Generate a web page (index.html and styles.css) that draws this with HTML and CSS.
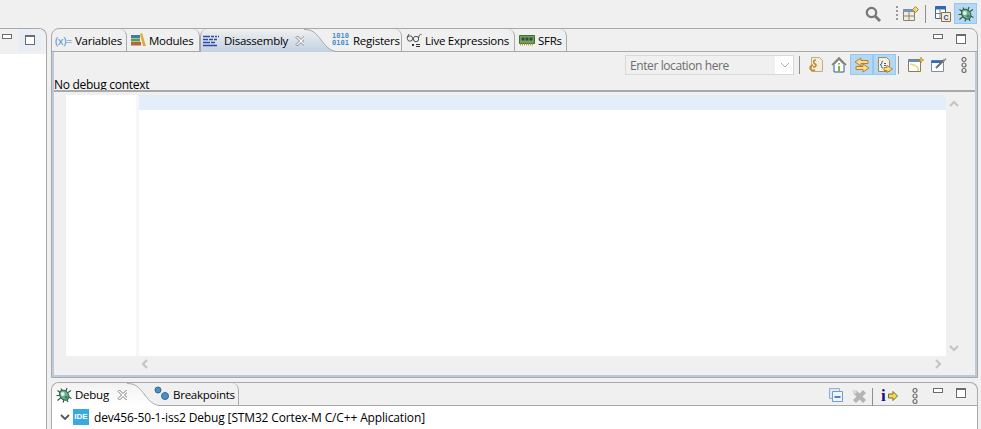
FILE: index.html
```html
<!DOCTYPE html>
<html lang="en">
<head>
<meta charset="utf-8">
<title>Debug</title>
<link rel="stylesheet" href="styles.css">
</head>
<body>
<svg class="defs" width="0" height="0">
  <defs>
    <linearGradient id="fade-blue" x1="0" y1="0" x2="0" y2="1"><stop offset="0" stop-color="#f0f0f0"/><stop offset="1" stop-color="#c2d1e1"/></linearGradient>
    <linearGradient id="fade-white" x1="0" y1="0" x2="0" y2="1"><stop offset="0" stop-color="#f2f2f2"/><stop offset="1" stop-color="#ffffff"/></linearGradient>
    <symbol id="bug" viewBox="0 0 16 16">
      <path d="M5 1.500l1.500 3M1.500 3.500L5 6M.5 8.500h3M1.500 13.500l3.500-3M7 15.500l1-3M12 15l-1.500-3.500M15.500 11.500l-3-1.500M15 3.500L12 5.500M11 1l-1 3" stroke="#2c5a44" stroke-width="1.100"/>
      <ellipse cx="8.200" cy="8.200" rx="4.200" ry="5.500" fill="#6fae8e" stroke="#2f5f48" transform="rotate(-40 8.200 8.200)"/>
      <circle cx="6.800" cy="7" r="1.900" fill="#e4f3ea"/>
      <circle cx="10.200" cy="10.200" r="1.400" fill="#3f8062"/>
    </symbol>
    <symbol id="close" viewBox="0 0 12 12">
      <path d="M2.500 1L6 4.500 9.500 1 11 2.500 7.500 6 11 9.500 9.500 11 6 7.500 2.500 11 1 9.500 4.500 6 1 2.500z" fill="#fff" stroke="#808080"/>
    </symbol>
    <symbol id="more" viewBox="0 0 8 16">
      <circle cx="4" cy="2.500" r="2" fill="none" stroke="#6e6e6e" stroke-width="1.200"/><circle cx="4" cy="8" r="2" fill="none" stroke="#6e6e6e" stroke-width="1.200"/><circle cx="4" cy="13.500" r="2" fill="none" stroke="#6e6e6e" stroke-width="1.200"/>
    </symbol>
  </defs>
</svg>

<header class="perspective-bar">
  <svg class="icon search-icon" viewBox="0 0 16 16"><circle cx="6.500" cy="6.500" r="4.700" fill="none" stroke="#777" stroke-width="2.200"/><path d="M10 10l5 5" stroke="#777" stroke-width="2.800"/></svg>
  <span class="dots-v"></span>
  <svg class="icon open-persp" viewBox="0 0 16 16"><path d="M.5 3.500h11v11H.5z" fill="#f3ecdc" stroke="#8a8272"/><path d="M.5 3.500h11v2.500H.5z" fill="#6f9ac4"/><path d="M.5 10h11M6 6v8.500" stroke="#8a8272"/><path d="M12.500 .5l3 3-3 3-3-3z" fill="#f4d67a" stroke="#b58a2c"/></svg>
  <span class="sep-v"></span>
  <span class="persp-btn"><svg class="icon" viewBox="0 0 16 16"><path d="M.5 .5h10v12H.5z" fill="#fff" stroke="#45648c"/><path d="M.5 .5h10v3H.5z" fill="#2f6bb8"/><path d="M.5 7.500h10M5 3.500v9" stroke="#6a7f9a"/><path d="M6.500 6.500h9v9h-9z" fill="#f3ecdc" stroke="#85704a"/><text x="8.500" y="14" class="c-mark">C</text></svg></span>
  <span class="persp-btn persp-active"><svg class="icon" viewBox="0 0 16 16"><use href="#bug"/></svg></span>
</header>

<main class="workspace">
  <aside class="stub">
    <div class="stub-head">
      <span class="win-min"></span>
      <span class="win-max-wrap"><span class="win-max"></span></span>
    </div>
    <div class="stub-body"></div>
  </aside>

  <div class="stack">
    <section class="panel panel-top">
      <div class="tabbar">
        <div class="tab tab-var">
          <span class="var-mark">(x)=</span><span>Variables</span>
        </div>
        <div class="tab tab-mod">
          <svg class="icon" viewBox="0 0 16 16"><path d="M1 3h9v3H1z" fill="#3f7d9e"/><path d="M1 6.500h9v3H1z" fill="#5d9a55"/><path d="M1 10h10v3.500H1z" fill="#b5673a"/><path d="M10 2l2-1 4 13h-3z" fill="#e0a93e"/></svg>
          <span>Modules</span>
        </div>
        <div class="tab tab-selected">
          <svg class="icon" viewBox="0 0 16 16"><path d="M0 3.500h7M8 3.500h3M12 3.500h2M15 3.500h1M0 6.500h5M6 6.500h4M11 6.500h3M0 9.500h7M8 9.500h4M0 12.500h14" stroke="#2c48a8" stroke-width="1.400"/></svg>
          <span class="tab-label">Disassembly</span>
          <svg class="tab-close" viewBox="0 0 12 12"><use href="#close"/></svg>
          <svg class="tab-curve" viewBox="0 0 32 23" preserveAspectRatio="none"><path d="M0 0c8 0 11 3 16 9 5 7 9 12 16 13v1H0z" fill="url(#fade-blue)"/><path d="M0 .5c8 0 11 3 16 9 5 7 9 12 16 13" fill="none" stroke="#a8a8a8"/></svg>
        </div>
        <div class="tab tab-reg">
          <span class="bin-mark">1010<br>0101</span>
          <span>Registers</span>
        </div>
        <div class="tab tab-live">
          <svg class="icon" viewBox="0 0 16 16"><circle cx="4" cy="6.500" r="2.700" fill="none" stroke="#555"/><circle cx="10" cy="7" r="2.700" fill="none" stroke="#555"/><path d="M1 5.500l2-3.500M12.500 6c.5-3 1.500-4 3-3.500M6.500 6.500h1" fill="none" stroke="#555"/><path d="M6 12l2 2M8 12l-2 2M10 12.500h4M10 14.500h4" stroke="#333"/></svg>
          <span>Live Expressions</span>
        </div>
        <div class="tab tab-sfr">
          <svg class="icon" viewBox="0 0 16 16"><path d="M.5 3.500h15v8H.5z" fill="#6da35a" stroke="#3d6e36"/><path d="M2.500 5.500h3v3h-3zM6.500 5.500h3v3h-3zM10.500 5.500h3v3h-3z" fill="#444"/><path d="M1 12.500h14" stroke="#c2a02e" stroke-width="2" stroke-dasharray="1 1"/></svg>
          <span>SFRs</span>
        </div>
        <div class="tabbar-fill">
          <span class="win-min"></span>
          <span class="win-max"></span>
        </div>
      </div>

      <div class="view-body">
        <div class="view-toolbar">
          <div class="location">
            <span class="location-text">Enter location here</span>
            <svg class="location-arrow" viewBox="0 0 10 6"><path d="M1 1l4 4 4-4" fill="none" stroke="#b0b0b0"/></svg>
          </div>
          <span class="sep-v sep-first"></span>
          <span class="tool"><svg class="icon" viewBox="0 0 16 16"><path d="M3.500 .5h8l3 3v11h-11z" fill="#f3ecd8" stroke="#b5ad95"/><path d="M8 3c-3 0-3 3-1 4s1 3-2 3M5 8s-3 1-3 3 3 3 5 2" fill="none" stroke="#c48a2a" stroke-width="1.600"/></svg></span>
          <span class="tool"><svg class="icon" viewBox="0 0 16 16"><path d="M3 7.500V15h10V7.500L8 2.500z" fill="#fff" stroke="#2e5b94"/><path d="M1 8l7-7 7 7" fill="none" stroke="#8a7a68" stroke-width="1.600"/><path d="M7 6h2v1.500H7zM7 9h2v6H7z" fill="#7cb342"/></svg></span>
          <span class="tool tool-on"><svg class="icon" viewBox="0 0 16 16"><path d="M7 1L1 5l6 4V6.500h7v-3H7z" fill="#f7dca0" stroke="#b9801f"/><path d="M9 7l6 4-6 4v-2.500H2v-3h7z" fill="#f7dca0" stroke="#b9801f"/></svg></span>
          <span class="tool tool-on"><svg class="icon" viewBox="0 0 16 16"><path d="M1.500 .5h8l3 3v11h-11z" fill="#f6f0df" stroke="#9a8a68"/><path d="M6 4C4.500 4 5 6 4.500 7S3 7.500 3 7.500 4.500 8 4.500 9 4.500 11 6 11M7 6.500h2M7 8.500h2" fill="none" stroke="#345a96"/><path d="M10 8.500l5.500 3.500-5.500 3.500v-2H7v-3h3z" fill="#f7dca0" stroke="#b9801f"/></svg></span>
          <span class="sep-v sep-second"></span>
          <span class="tool"><svg class="icon" viewBox="0 0 16 16"><path d="M.5 2.500h12v12H.5z" fill="#fff" stroke="#8c7a50"/><path d="M.5 2.500h12V5H.5z" fill="#5e8fc4"/><path d="M10 14c1-3-1-6-8-7" fill="none" stroke="#f1d27c" stroke-width="1.500"/><path d="M13 0l1 2.500 2 .5-2 .5-1 2.500-1-2.500-2-.5 2-.5z" fill="#e8b93c" stroke="#a67c1a" stroke-width=".5"/></svg></span>
          <span class="tool"><svg class="icon" viewBox="0 0 16 16"><path d="M.5 3.500h12v11H.5z" fill="#fff" stroke="#7f8ea3"/><path d="M.5 3.500h12V6H.5z" fill="#2f6db5"/><path d="M5 11l8-8" stroke="#6e6e6e" stroke-width="2"/><path d="M11.500 4.500l3-3.500 1 1-3 3.500z" fill="#8a8a8a"/></svg></span>
          <svg class="tool-more" viewBox="0 0 8 16"><use href="#more"/></svg>
        </div>
        <div class="status">No debug context</div>
        <div class="editor">
          <div class="editor-main">
            <div class="ruler"></div>
            <div class="ruler-white"></div>
            <div class="ruler-edge"></div>
            <div class="text-area"><div class="current-line"></div></div>
            <div class="vscroll">
              <svg class="arrow" viewBox="0 0 10 10"><path d="M1 7l4-4 4 4" fill="none" stroke="#c4c4c4" stroke-width="2.200"/></svg>
              <svg class="arrow" viewBox="0 0 10 10"><path d="M1 3l4 4 4-4" fill="none" stroke="#c4c4c4" stroke-width="2.200"/></svg>
            </div>
          </div>
          <div class="hscroll">
            <svg class="arrow" viewBox="0 0 10 10"><path d="M7 1L3 5l4 4" fill="none" stroke="#c4c4c4" stroke-width="2.200"/></svg>
            <svg class="arrow" viewBox="0 0 10 10"><path d="M3 1l4 4-4 4" fill="none" stroke="#c4c4c4" stroke-width="2.200"/></svg>
          </div>
        </div>
      </div>
    </section>

    <section class="panel panel-debug">
      <div class="tabbar">
        <div class="tab tab-debug">
          <svg class="icon" viewBox="0 0 16 16"><use href="#bug"/></svg>
          <span>Debug</span>
          <svg class="tab-close" viewBox="0 0 12 12"><use href="#close"/></svg>
          <svg class="tab-curve" viewBox="0 0 32 23" preserveAspectRatio="none"><path d="M0 0c8 0 11 3 16 9 5 7 9 12 16 13v1H0z" fill="url(#fade-white)"/><path d="M0 .5c8 0 11 3 16 9 5 7 9 12 16 13" fill="none" stroke="#a8a8a8"/></svg>
        </div>
        <div class="tab tab-bp">
          <svg class="icon" viewBox="0 0 16 16"><circle cx="4" cy="4" r="3" fill="#4f8fc4" stroke="#2f6a9c"/><circle cx="11" cy="10" r="3.500" fill="#4f8fc4" stroke="#2f6a9c"/></svg>
          <span>Breakpoints</span>
        </div>
        <div class="tabbar-fill">
          <svg class="icon collapse-icon" viewBox="0 0 16 16"><path d="M.5 .5h10v10H.5z" fill="#dbe8f6" stroke="#8fb0d4"/><path d="M3.500 3.500h10v10h-10z" fill="#eef5fc" stroke="#6f9cc8"/><path d="M5.500 9h6" stroke="#2456a0" stroke-width="1.500"/></svg>
          <svg class="icon remove-icon" viewBox="0 0 16 16"><path d="M2 5l3-3 3.500 3.500L12 2l3 3-3.500 3.500L15 12l-3 3-3.500-3.500L5 15l-3-3 3.500-3.500z" fill="#b4b4b4"/><path d="M1 3l2-2 3 3-2 2z" fill="#dcdcdc"/></svg>
          <span class="sep-v sep-debug"></span>
          <span class="info-mark">i</span>
          <svg class="info-arrow" viewBox="0 0 10 10"><path d="M5 .5L9.500 5 5 9.500V7H.5V3H5z" fill="#ecd95c" stroke="#7d6c18"/></svg>
          <svg class="debug-more" viewBox="0 0 8 16"><use href="#more"/></svg>
          <span class="win-min"></span>
          <span class="win-max"></span>
        </div>
      </div>
      <div class="tree">
        <div class="tree-row">
          <svg class="chevron" viewBox="0 0 10 6"><path d="M1 1l4 4 4-4" fill="none" stroke="#555" stroke-width="1.800"/></svg>
          <span class="ide-badge">IDE</span>
          <span>dev456-50-1-iss2 Debug [STM32 Cortex-M C/C++ Application]</span>
        </div>
        <div class="tree-row">
          <svg class="icon thread-icon" viewBox="0 0 16 16"><path d="M4 4a4 4 0 0 1 8 0" fill="#5a8ac0" stroke="#2f4f7f"/></svg>
        </div>
      </div>
    </section>
  </div>
</main>
</body>
</html>
```

FILE: styles.css
```css
* { box-sizing: border-box; }

html, body {
  margin: 0;
  height: 429px;
  overflow: hidden;
}

body {
  background: #f0f0f0;
  color: #000;
  font: 12px "Open Sans", "Liberation Sans", sans-serif;
  letter-spacing: -.15px;
}

.defs { display: block; height: 0; }

.icon { width: 16px; height: 16px; flex: none; display: block; }

/* Perspective bar */
.perspective-bar {
  height: 28px;
  display: flex;
  align-items: center;
  justify-content: flex-end;
  padding: 0 4px 1px 0;
}
.search-icon { margin-right: 15px; }
.dots-v {
  width: 2px;
  height: 16px;
  margin-right: 5px;
  background: repeating-linear-gradient(#999 0 2px, transparent 2px 4px);
}
.sep-v { width: 1px; background: #8f8f8f; flex: none; }
.perspective-bar .sep-v { height: 18px; margin: 0 5px 0 6px; }
.persp-btn {
  width: 23px;
  height: 21px;
  display: flex;
  align-items: center;
  justify-content: center;
}
.persp-active { background: #b5d7f2; outline: 1px solid #90c8f6; outline-offset: -1px; }
.c-mark { font: bold 7px "Liberation Sans", sans-serif; fill: #2f4f7f; }

/* Workspace */
.workspace { display: flex; height: 401px; }

.stub {
  width: 47px;
  margin-right: 4px;
  flex: none;
  border-top: 1px solid #a9a9a9;
  border-right: 1px solid #a9a9a9;
  border-top-right-radius: 8px;
  display: flex;
  flex-direction: column;
}
.stub-head {
  height: 25px;
  display: flex;
  align-items: flex-start;
}
.stub-head .win-min { margin: 5px 0 0 2px; }
.win-max-wrap {
  width: 23px;
  height: 22px;
  margin-left: 6px;
  background: #e8eef4;
  display: flex;
  align-items: center;
  justify-content: center;
}
.stub-body { flex: 1; background: #fff; }

.win-min {
  display: block;
  flex: none;
  width: 10px;
  height: 5px;
  border: 1px solid #6b6b6b;
  background: #fff;
}
.win-max {
  display: block;
  flex: none;
  width: 10px;
  height: 10px;
  border: 1px solid #6b6b6b;
  border-top-width: 2px;
  background: #fff;
}

.stack {
  width: 927px;
  flex: none;
  display: flex;
  flex-direction: column;
  gap: 4px;
}

/* Panels */
.panel {
  border: 1px solid #a9a9a9;
  border-bottom: 0;
  border-top-left-radius: 8px;
  border-top-right-radius: 8px;
  overflow: hidden;
}
.panel-top {
  height: 350px;
  display: flex;
  flex-direction: column;
  border-bottom: 1px solid #a9a9a9;
}
.panel-debug { flex: 1; }

.tabbar {
  height: 23px;
  display: flex;
  border-bottom: 1px solid #a9a9a9;
  flex: none;
}
.tab {
  display: flex;
  align-items: center;
  gap: 3px;
  height: 22px;
  flex: none;
  border-right: 1px solid #a9a9a9;
  border-top-right-radius: 7px;
  position: relative;
  white-space: nowrap;
  font-size: 11.5px;
  letter-spacing: -.25px;
}
.tab-var { width: 75px; padding-left: 3px; }
.tab-mod { width: 73px; padding-left: 3px; }
.tab-reg { width: 95px; padding-left: 25px; }
.tab-live { width: 113px; padding-left: 4px; }
.tab-sfr { width: 52px; padding-left: 4px; }
.tab-bp { width: 109px; padding-left: 24px; }
.var-mark { color: #4a8fc8; width: 17px; flex: none; font-size: 11px; letter-spacing: -.4px; }
.tab-selected,
.tab-debug {
  height: 23px;
  border-right: 0;
  border-radius: 0;
}
.tab-selected {
  width: 107px;
  padding: 0 0 0 2px;
  border-left: 1px solid #a9a9a9;
  border-top-left-radius: 7px;
  background: linear-gradient(#f0f0f0, #c2d1e1);
}
.tab-debug {
  width: 78px;
  padding: 0 1px 0 4px;
  background: linear-gradient(#f2f2f2, #fff);
}
.tab-label { margin-left: 2px; }
.tab-close { width: 12px; height: 12px; flex: none; margin-left: auto; }
.tab-curve { position: absolute; top: 0; left: calc(100% - 3px); width: 32px; height: 23px; z-index: 1; }
.bin-mark {
  color: #4a8fc8;
  font: bold 7px/7px "DejaVu Sans Mono", monospace;
  letter-spacing: 0;
  width: 18px;
}
.tabbar-fill {
  flex: 1;
  display: flex;
  align-items: flex-start;
  justify-content: flex-end;
  padding: 5px 11px 0 0;
}
.tabbar-fill .win-min { margin-left: 14px; }
.tabbar-fill .win-max { margin-left: 13px; }

/* View */
.view-body {
  flex: 1;
  min-height: 0;
  display: flex;
  flex-direction: column;
  background: #f0f0f0;
  border: 2px solid #bccbdb;
  border-top: 0;
}
.view-toolbar {
  height: 25px;
  display: flex;
  align-items: center;
  justify-content: flex-end;
  padding-right: 7px;
  flex: none;
}
.location {
  width: 169px;
  height: 20px;
  border: 1px solid #d9d9d9;
  background: #fff;
  display: flex;
  align-items: center;
  color: #6d6d6d;
  margin-right: 4px;
  letter-spacing: -.4px;
}
.location-text {
  flex: 1;
  background: #f0f0f0;
  align-self: stretch;
  line-height: 19px;
  padding-left: 4px;
  margin-right: 5px;
}
.location-arrow { width: 10px; height: 6px; margin-right: 3px; flex: none; }
.view-toolbar .sep-v { height: 18px; }
.sep-first { margin: 0 4px 0 1px; }
.sep-second { margin: 0 5px 0 2px; }
.tool {
  width: 23px;
  height: 21px;
  display: flex;
  align-items: center;
  justify-content: center;
  flex: none;
}
.tool-on { background: #b5d7f2; border: 1px solid #90c8f6; }
.tool-more { width: 8px; height: 16px; margin-left: 10px; flex: none; }
.status { height: 13px; line-height: 15px; flex: none; letter-spacing: -.28px; }
.editor {
  flex: 1;
  min-height: 0;
  border-top: 2px solid #a9a9a9;
  display: flex;
  flex-direction: column;
}
.editor-main { flex: 1; display: flex; min-height: 0; padding-top: 3px; }
.ruler { width: 12px; }
.ruler-white { width: 70px; background: #fff; }
.ruler-edge { width: 3px; background: #f6f6f6; }
.text-area { flex: 1; background: #fff; }
.current-line { height: 15px; background: #e4eefa; }
.vscroll {
  width: 29px;
  display: flex;
  flex-direction: column;
  justify-content: space-between;
  padding: 4px 0 3px 3px;
}
.arrow { width: 10px; height: 10px; display: block; }
.hscroll {
  height: 19px;
  flex: none;
  display: flex;
  justify-content: space-between;
  align-items: flex-start;
  padding: 3px 32px 0 86px;
}

/* Debug panel toolbar */
.collapse-icon { margin-right: 6px; }
.sep-debug { height: 18px; margin: 0 8px 0 5px; }
.info-mark {
  font: bold 17px/16px "Liberation Serif", serif;
  color: #10108a;
  width: 7px;
}
.info-arrow { width: 10px; height: 10px; margin-top: 3px; flex: none; }
.debug-more { width: 8px; height: 16px; flex: none; margin-left: 13px; }
.tree { background: #fff; height: 44px; padding-left: 2px; overflow: hidden; }
.tree-row { display: flex; align-items: center; height: 22px; }
.chevron { width: 10px; height: 6px; margin: 0 3px 0 6px; flex: none; }
.ide-badge {
  width: 16px;
  height: 16px;
  background: #3aa9e0;
  color: #fff;
  font: bold 8px/16px "Liberation Sans", sans-serif;
  letter-spacing: 0;
  text-align: center;
  margin-right: 5px;
  flex: none;
}
.thread-icon { margin-left: 39px; }
```
